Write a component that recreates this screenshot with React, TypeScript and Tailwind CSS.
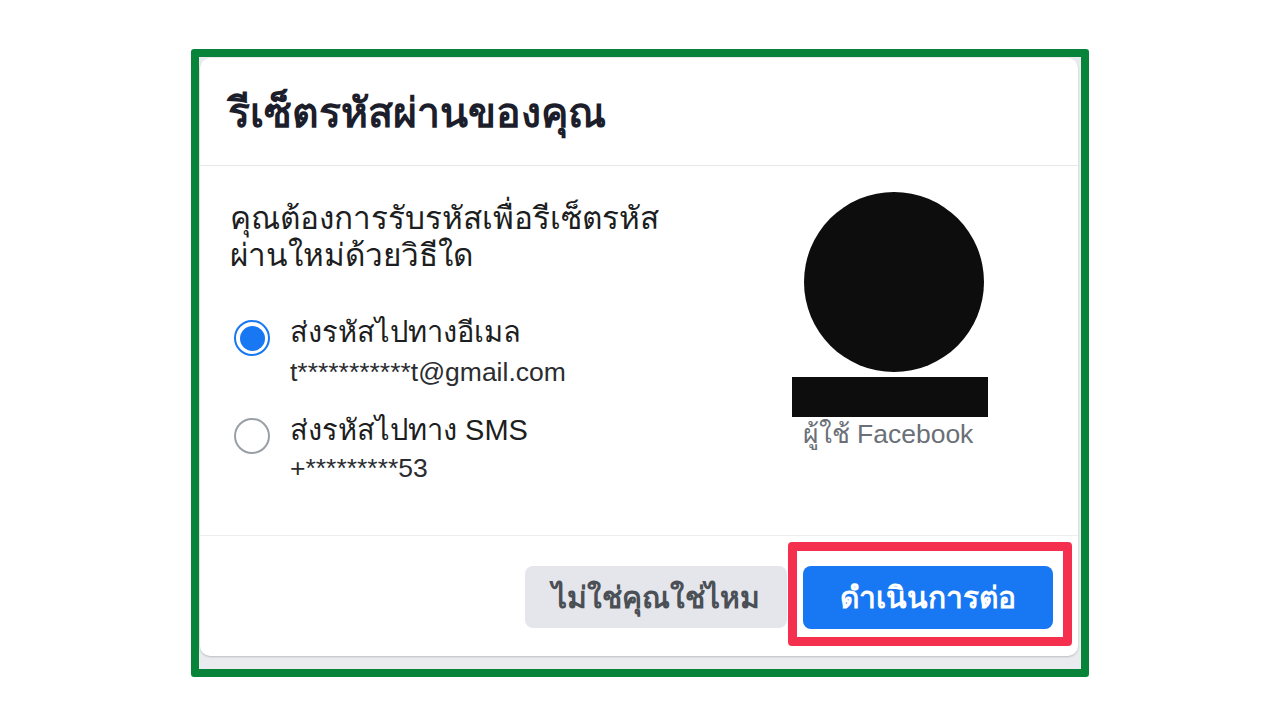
export default function App() {
  return (
    <div className="min-h-[720px] w-full bg-white pt-[49px] font-['Liberation_Sans','Noto_Sans','DejaVu_Sans',sans-serif]">
      <div className="mx-auto w-[898px] h-[628px] border-[8px] border-[#08843a] rounded-[3px] bg-[#e9ebee] pt-px pl-px pr-[3px] pb-[13px]">
        <div className="relative flex h-full flex-col rounded-[10px] bg-white shadow-[0_1px_2px_rgba(0,0,0,0.2)]">
          {/* header */}
          <div className="flex h-[108px] items-center border-b border-[#e5e7ea] px-[28px] pt-[4px]">
            <h1 className="text-[41px] font-bold text-[#1c1e2b]">รีเซ็ตรหัสผ่านของคุณ</h1>
          </div>

          {/* body */}
          <div className="flex flex-1 items-start border-b border-[#eceef0] pl-[30px]">
            <div className="w-[564px] pt-[34px]">
              <p className="text-[31.5px] leading-[37px] text-[#1c1e21]">
                คุณต้องการรับรหัสเพื่อรีเซ็ตรหัส
                <br />
                ผ่านใหม่ด้วยวิธีใด
              </p>

              <div className="mt-[37px] flex flex-col gap-[18px]">
                <label className="flex items-start gap-[20px]">
                  <span className="ml-[4px] mt-[9px] flex h-[36px] w-[36px] items-center justify-center rounded-full border-[2px] border-[#1877f2]">
                    <span className="h-[25px] w-[25px] rounded-full bg-[#1877f2]" />
                  </span>
                  <span className="flex flex-col">
                    <span className="text-[29px] leading-[42px] text-[#1c1e21]">ส่งรหัสไปทางอีเมล</span>
                    <span className="text-[26.5px] leading-[38px] text-[#2a2c30]">t***********t@gmail.com</span>
                  </span>
                </label>
                <label className="flex items-start gap-[20px]">
                  <span className="ml-[4px] mt-[9px] h-[36px] w-[36px] rounded-full border-[2px] border-[#9a9fa6]" />
                  <span className="flex flex-col">
                    <span className="text-[29px] leading-[42px] text-[#1c1e21]">ส่งรหัสไปทาง SMS</span>
                    <span className="text-[26.5px] leading-[34px] text-[#2a2c30]">+*********53</span>
                  </span>
                </label>
              </div>
            </div>

            <div className="flex w-[200px] flex-col items-center pt-[26px]">
              <div className="h-[180px] w-[180px] rounded-full bg-[#0d0d0d]" />
              <div className="mr-[8px] mt-[5px] h-[40px] w-[196px] bg-[#0d0d0d]" />
              <span className="mr-[12px] mt-px text-[26.5px] leading-[32px] text-[#6b7078]">ผู้ใช้ Facebook</span>
            </div>
          </div>

          {/* footer */}
          <div className="flex h-[120px] items-start justify-end gap-[16px] pr-[25px] pt-[30px]">
            <button className="h-[62px] w-[262px] rounded-[8px] bg-[#e4e6eb] text-[30px] font-bold text-[#4b4f56]">
              ไม่ใช่คุณใช่ไหม
            </button>
            <button className="h-[63px] w-[250px] rounded-[8px] bg-[#1877f2] text-[30px] font-bold text-white">
              ดำเนินการต่อ
            </button>
          </div>

          {/* annotation */}
          <div className="pointer-events-none absolute left-[588px] top-[484px] h-[104px] w-[284px] rounded-[4px] border-[9px] border-[#f5304f]" />
        </div>
      </div>
    </div>
  );
}
